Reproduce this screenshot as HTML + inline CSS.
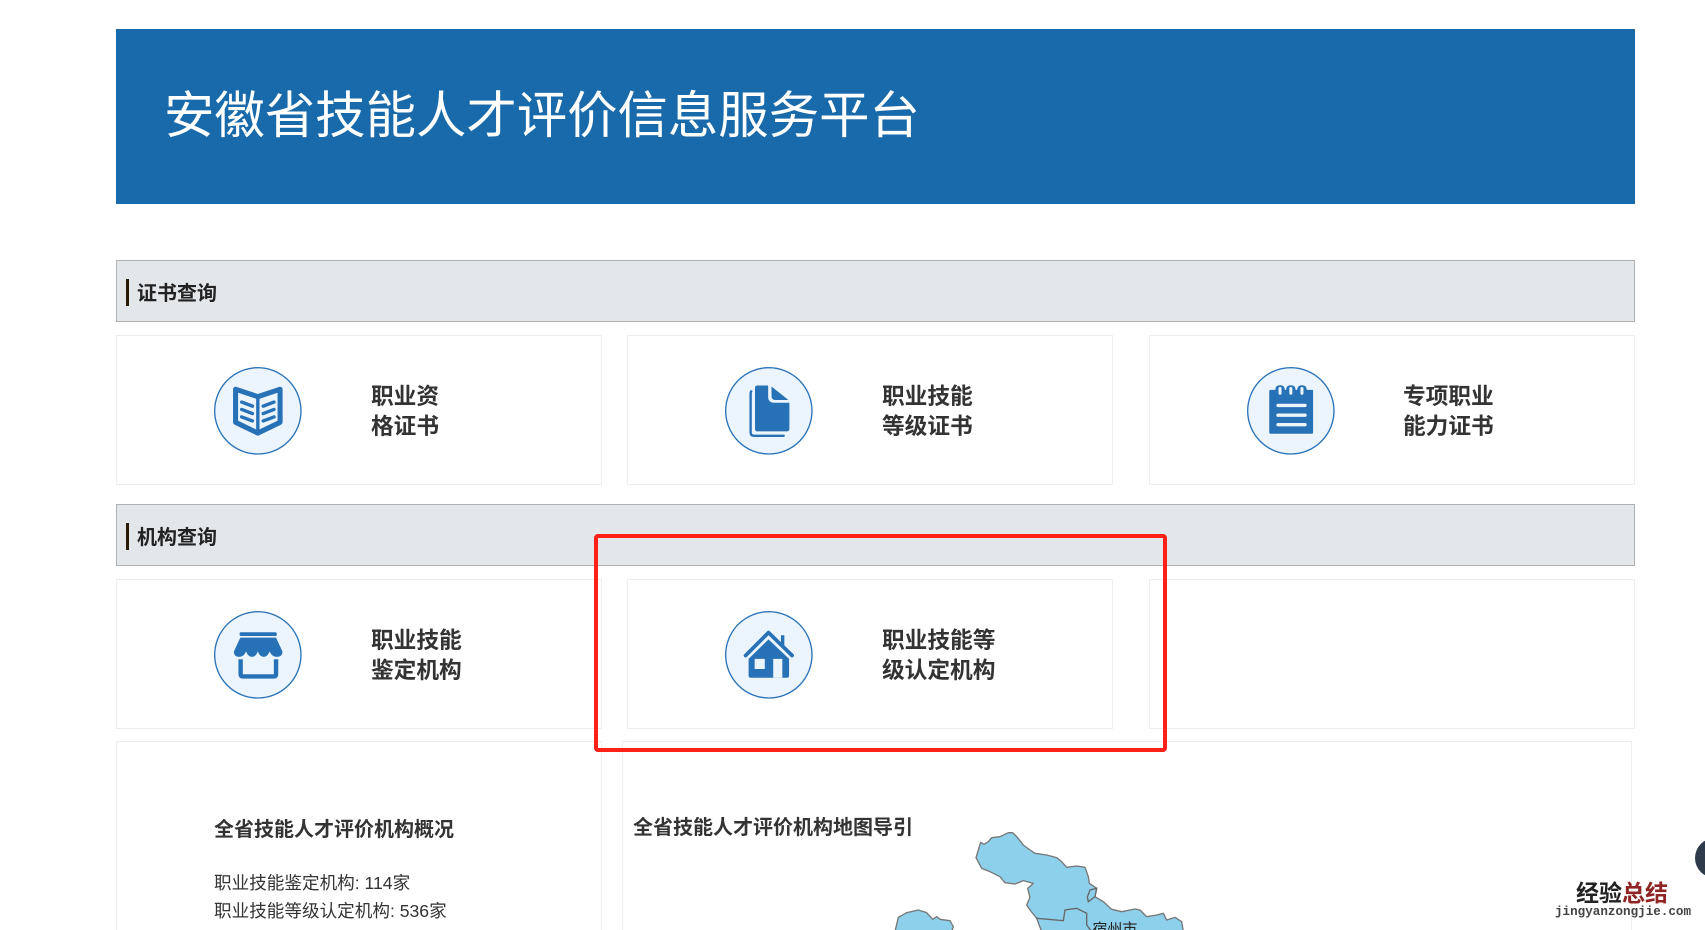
<!DOCTYPE html>
<html lang="zh-CN">
<head>
<meta charset="utf-8">
<title>安徽省技能人才评价信息服务平台</title>
<style>
html,body{margin:0;padding:0;background:#fff;width:1705px;height:930px;overflow:hidden}
body{position:relative;font-family:"Liberation Sans","Noto Sans CJK SC",sans-serif;color:#333}
.a{position:absolute;box-sizing:border-box}
.head{left:116px;top:29px;width:1519px;height:175px;background:#196aab}
.title{left:164px;top:83px;font-size:50.4px;line-height:66px;color:#fff;white-space:nowrap;font-weight:400}
.bar{left:116px;width:1519px;height:62px;background:#e4e7ea;border:1px solid #aeb0b2}
.acc{left:126px;width:3px;height:27px;background:#2a1a08}
.bt{left:137px;top:0;font-size:20px;line-height:24px;font-weight:700;color:#222;white-space:nowrap}
.card{border:1px solid #eceeef;background:#fff}
.t{font-size:22.7px;line-height:30px;font-weight:700;color:#333;white-space:nowrap}
svg.i{position:absolute;width:88px;height:88px;overflow:visible}
.h3{font-size:20px;line-height:26px;font-weight:700;color:#333;white-space:nowrap}
.p{font-size:17.6px;line-height:28px;color:#333;white-space:nowrap}
</style>
</head>
<body>
<div class="a head"></div>
<div class="a title">安徽省技能人才评价信息服务平台</div>

<div class="a bar" style="top:260px"></div>
<div class="a acc" style="top:279px"></div>
<div class="a bt" style="top:282px">证书查询</div>

<div class="a card" style="left:116px;top:335px;width:486px;height:150px"></div>
<div class="a card" style="left:627px;top:335px;width:486px;height:150px"></div>
<div class="a card" style="left:1149px;top:335px;width:486px;height:150px"></div>

<svg class="i" style="left:214px;top:367px" viewBox="0 0 261 261">
<circle cx="130" cy="130" r="128" fill="#ecf5fe" stroke="#2a73b8" stroke-width="4"/>
<path d="M64 66L130 88L196 66V164L130 196L64 164Z" fill="none" stroke="#2771b7" stroke-width="15" stroke-linejoin="round"/>
<path d="M130 88V196" stroke="#2771b7" stroke-width="10"/>
<path d="M82 104L114 116M82 126L114 138M82 148L114 160M178 104L146 116M178 126L146 138M178 148L146 160" stroke="#2771b7" stroke-width="10" stroke-linecap="round" fill="none"/>
</svg>
<div class="a t" style="left:371px;top:381px">职业资<br>格证书</div>

<svg class="i" style="left:725px;top:367px" viewBox="0 0 261 261">
<circle cx="130" cy="130" r="128" fill="#ecf5fe" stroke="#2a73b8" stroke-width="4"/>
<path d="M78 72Q76 72 76 80V194Q76 204 86 204H174" fill="none" stroke="#2771b7" stroke-width="7" stroke-linecap="round"/>
<path d="M96 55H128V88Q128 106 146 106H191V183Q191 191 183 191H96Q89 191 89 183V62Q89 55 96 55Z" fill="#2771b7"/>
<path d="M138 58L188 98H150Q138 98 138 88Z" fill="#2771b7"/>
</svg>
<div class="a t" style="left:882px;top:381px">职业技能<br>等级证书</div>

<svg class="i" style="left:1247px;top:367px" viewBox="0 0 261 261">
<circle cx="130" cy="130" r="128" fill="#ecf5fe" stroke="#2a73b8" stroke-width="4"/>
<path d="M70 68H84Q84 54 98 54Q112 54 112 68H116Q116 54 130 54Q144 54 144 68H149Q149 54 163 54Q177 54 177 68H196V194Q196 198 192 198H70Q66 198 66 194V72Q66 68 70 68Z" fill="#2771b7"/>
<path d="M98 64V78M130 64V78M163 64V78" stroke="#ecf5fe" stroke-width="9" stroke-linecap="round"/>
<path d="M92 114H172M92 143H172M92 171H172" stroke="#ecf5fe" stroke-width="10" stroke-linecap="round"/>
</svg>
<div class="a t" style="left:1403px;top:381px">专项职业<br>能力证书</div>

<div class="a bar" style="top:504px"></div>
<div class="a acc" style="top:523px"></div>
<div class="a bt" style="top:526px">机构查询</div>

<div class="a card" style="left:116px;top:579px;width:486px;height:150px"></div>
<div class="a card" style="left:627px;top:579px;width:486px;height:150px"></div>
<div class="a card" style="left:1149px;top:579px;width:486px;height:150px"></div>

<svg class="i" style="left:214px;top:611px" viewBox="0 0 261 261">
<circle cx="130" cy="130" r="128" fill="#ecf5fe" stroke="#2a73b8" stroke-width="4"/>
<rect x="76" y="63" width="110" height="11" rx="4" fill="#2771b7"/>
<path d="M78 79H184L203 120Q203 136 186 136Q172 136 165 120Q158 136 148 136Q136 136 130 120Q124 136 112 136Q102 136 95 120Q88 136 75 136Q59 136 59 120Z" fill="#2771b7"/>
<path d="M79 143V188Q79 194 85 194H178Q184 194 184 188V143" fill="none" stroke="#2771b7" stroke-width="13"/>
</svg>
<div class="a t" style="left:371px;top:625px">职业技能<br>鉴定机构</div>

<svg class="i" style="left:725px;top:611px" viewBox="0 0 261 261">
<circle cx="130" cy="130" r="128" fill="#ecf5fe" stroke="#2a73b8" stroke-width="4"/>
<path d="M61 132L129 64L199 132" fill="none" stroke="#2771b7" stroke-width="11" stroke-linecap="round" stroke-linejoin="round"/>
<rect x="166" y="72" width="10" height="36" fill="#2771b7"/>
<path d="M129 84L190 142V192Q190 198 184 198H76Q70 198 70 192V142Z" fill="#2771b7"/>
<rect x="88" y="142" width="30" height="30" fill="#ecf5fe"/>
<rect x="143" y="142" width="27" height="56" fill="#ecf5fe"/>
</svg>
<div class="a t" style="left:882px;top:625px">职业技能等<br>级认定机构</div>

<div class="a card" style="left:116px;top:741px;width:486px;height:200px"></div>
<div class="a card" style="left:622px;top:741px;width:1010px;height:200px"></div>

<div class="a h3" style="left:214px;top:817px">全省技能人才评价机构概况</div>
<div class="a p" style="left:214px;top:869px">职业技能鉴定机构: 114家<br>职业技能等级认定机构: 536家</div>
<div class="a h3" style="left:633px;top:815px">全省技能人才评价机构地图导引</div>

<svg class="a" style="left:860px;top:810px;width:360px;height:120px;overflow:hidden" viewBox="0 0 1080 360">
<path d="M348 143L362 97L372 103L385 95L395 83L420 80L445 68L458 68L470 80L480 92L490 105L510 120L525 130L560 135L590 143L605 155L620 172L650 168L675 172L685 200L688 220L710 235L705 260L730 275L755 298L785 305L825 297L840 300L860 320L890 315L910 310L920 330L945 322L965 335L970 365L545 365L530 325L510 300L500 285L510 262L503 235L520 220L490 212L465 222L435 218L420 200L390 185L365 175Z" fill="#8dd0ec" stroke="#777" stroke-width="4" stroke-linejoin="round"/>
<path d="M105 365L115 322L140 308L175 300L200 308L218 328L230 320L240 328L270 332L280 350L275 365Z" fill="#8dd0ec" stroke="#777" stroke-width="4" stroke-linejoin="round"/>
<path d="M530 325L610 332L615 300L650 295L680 310L680 345L695 365" fill="none" stroke="#666" stroke-width="4"/>
<path d="M690 240L710 235L705 260L685 275L682 262Z" fill="#8dd0ec" stroke="#666" stroke-width="4"/>
<text x="697" y="372" font-size="45" fill="#222" font-family="Liberation Sans,Noto Sans CJK SC,sans-serif">宿州市</text>
</svg>

<div class="a" style="left:594px;top:534px;width:573px;height:218px;border:4px solid #ff2018;border-radius:4px"></div>

<div class="a" style="left:1695px;top:838px;width:40px;height:40px;border-radius:50%;background:#2f3a4a"></div>

<div class="a" style="left:1576px;top:879px;font-size:23px;line-height:28px;font-weight:700;white-space:nowrap;color:#222">经验<span style="color:#8f2525">总结</span></div>
<div class="a" style="left:1555px;top:904px;font-family:'Liberation Mono',monospace;font-size:12.6px;line-height:16px;font-weight:700;color:#444;white-space:nowrap">jingyanzongjie.com</div>
</body>
</html>
